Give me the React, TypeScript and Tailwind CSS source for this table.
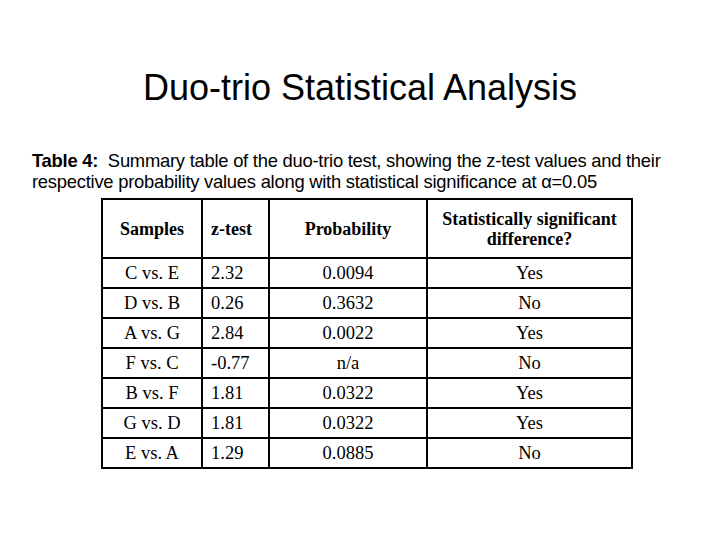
const rows = [
  { s: "C vs. E", z: "2.32", p: "0.0094", d: "Yes" },
  { s: "D vs. B", z: "0.26", p: "0.3632", d: "No" },
  { s: "A vs. G", z: "2.84", p: "0.0022", d: "Yes" },
  { s: "F vs. C", z: "-0.77", p: "n/a", d: "No" },
  { s: "B vs. F", z: "1.81", p: "0.0322", d: "Yes" },
  { s: "G vs. D", z: "1.81", p: "0.0322", d: "Yes" },
  { s: "E vs. A", z: "1.29", p: "0.0885", d: "No" },
];

export default function App() {
  return (
    <div className="w-[720px] h-[540px] bg-white text-black overflow-hidden">
      <h1 className="pt-[67px] h-[150px] text-center text-[36px] leading-[42px] font-['Liberation_Sans',Arial,sans-serif]">
        Duo-trio Statistical Analysis
      </h1>
      <p className="pl-[32px] text-[18.4px] leading-[21px] tracking-[-0.25px] font-['Liberation_Sans',Arial,sans-serif] whitespace-nowrap">
        <span className="font-bold">Table 4:</span>&nbsp; Summary table of the duo-trio test, showing the z-test values and their
        <br />
        respective probability values along with statistical significance at α=0.05
      </p>
      <table className="mt-[6px] ml-[101px] border-collapse border-2 border-black font-['Liberation_Serif','Times_New_Roman',serif] text-[18.5px] leading-[20px]">
        <colgroup>
          <col className="w-[100px]" />
          <col className="w-[67px]" />
          <col className="w-[158px]" />
          <col className="w-[205px]" />
        </colgroup>
        <thead>
          <tr className="h-[59px] font-bold text-[18px]">
            <th className="border-2 border-black text-center">Samples</th>
            <th className="border-2 border-black text-left pl-[8px]">z-test</th>
            <th className="border-2 border-black text-center">Probability</th>
            <th className="border-2 border-black text-center">
              Statistically significant
              <br />
              difference?
            </th>
          </tr>
        </thead>
        <tbody>
          {rows.map((r) => (
            <tr key={r.s} className="h-[30px]">
              <td className="border-2 border-black text-center">{r.s}</td>
              <td className="border-2 border-black text-left pl-[8px]">{r.z}</td>
              <td className="border-2 border-black text-center">{r.p}</td>
              <td className="border-2 border-black text-center">{r.d}</td>
            </tr>
          ))}
        </tbody>
      </table>
    </div>
  );
}
